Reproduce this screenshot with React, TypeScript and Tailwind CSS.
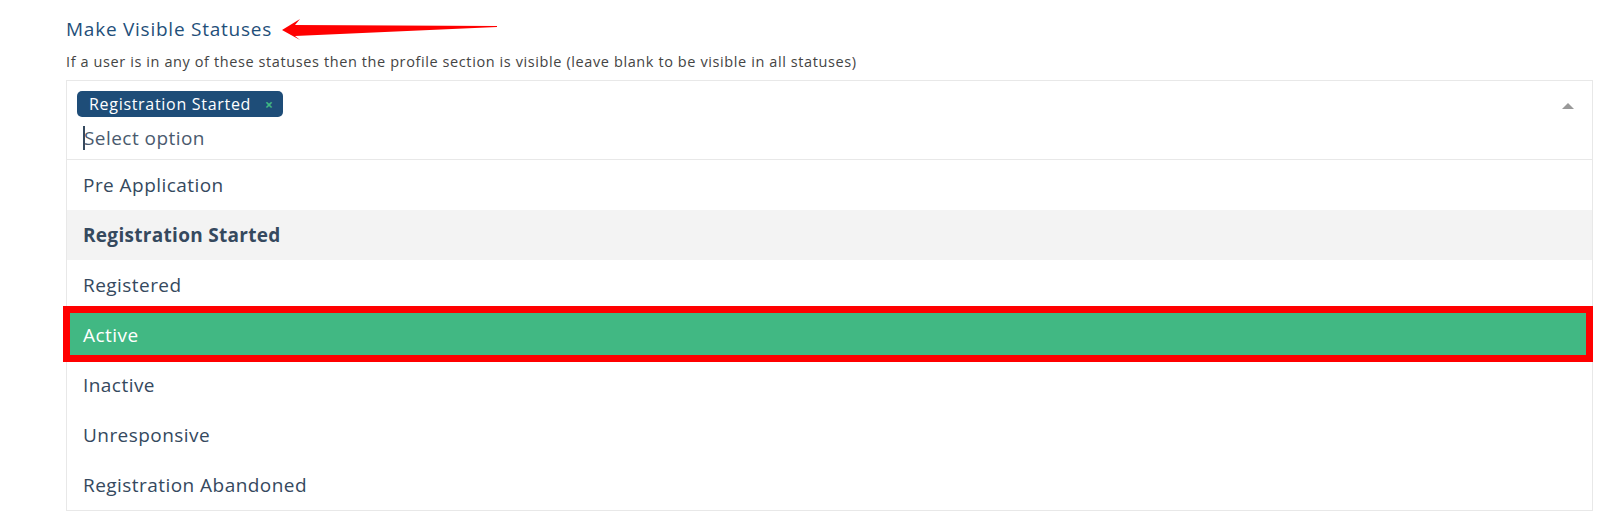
import { useState } from 'react';

const statuses = [
  'Pre Application',
  'Registration Started',
  'Registered',
  'Active',
  'Inactive',
  'Unresponsive',
  'Registration Abandoned',
];

export default function App() {
  const [selected] = useState<string[]>(['Registration Started']);
  const highlighted = 'Active';

  return (
    <div className="w-[1624px] h-[526px] bg-white pl-[66px] pr-[31px] pt-[16px] font-['Open_Sans',sans-serif] relative">
      <div className="relative">
        <h3 className="text-[19px] leading-[26px] tracking-[0.75px] text-[#1f4f7a]">Make Visible Statuses</h3>
        <svg className="absolute left-[214px] top-[-6px]" width="230" height="40" viewBox="0 0 230 40">
          <polygon points="2,20 20,9 15,15 217,16 217,17 15,26 20,30" fill="#ff0000" />
        </svg>
      </div>
      <p className="mt-[10px] text-[14.5px] leading-[20px] tracking-[0.6px] text-[#444]">
        If a user is in any of these statuses then the profile section is visible (leave blank to be visible in all statuses)
      </p>

      <div className="mt-[8px] border border-[#e8e8e8] bg-white">
        <div className="relative h-[79px] border-b border-[#e8e8e8] px-[10px] pt-[10px]">
          <div className="flex gap-2">
            {selected.map((s) => (
              <span key={s} className="inline-flex items-center h-[26px] rounded-[5px] bg-[#1e4d78] pl-[12px] pr-[9px] text-white text-[16px] tracking-[0.7px]">
                {s}
                <span className="ml-[14px] text-[#41b883] text-[14px] font-bold">×</span>
              </span>
            ))}
          </div>
          <div className="flex items-center mt-[7px] pl-[6px] h-[28px]">
            <span className="w-[2px] h-[24px] bg-[#35495e]" />
            <span className="text-[19px] tracking-[0.45px] text-[#4a5a6e] -ml-[1px]">Select option</span>
          </div>
          <svg className="absolute right-[18px] top-[22px]" width="12" height="6" viewBox="0 0 12 6">
            <polygon points="0,6 6,0 12,6" fill="#999999" />
          </svg>
        </div>
        <ul>
          {statuses.map((s) => {
            const isSel = selected.includes(s);
            const isHi = s === highlighted;
            return (
              <li
                key={s}
                className={`relative h-[50px] flex items-center pl-[16px] text-[19px] ${
                  isHi
                    ? 'bg-[#41b883] text-white tracking-[0.45px]'
                    : isSel
                      ? 'bg-[#f3f3f3] text-[#35495e] font-bold tracking-[0.3px]'
                      : 'text-[#35495e] tracking-[0.45px]'
                }`}
              >
                {s}
                {isHi && (
                  <span className="absolute left-[-4px] top-[-4px] w-[1530px] h-[56px] border-[7px] border-[#ff0000]" />
                )}
              </li>
            );
          })}
        </ul>
      </div>
    </div>
  );
}
